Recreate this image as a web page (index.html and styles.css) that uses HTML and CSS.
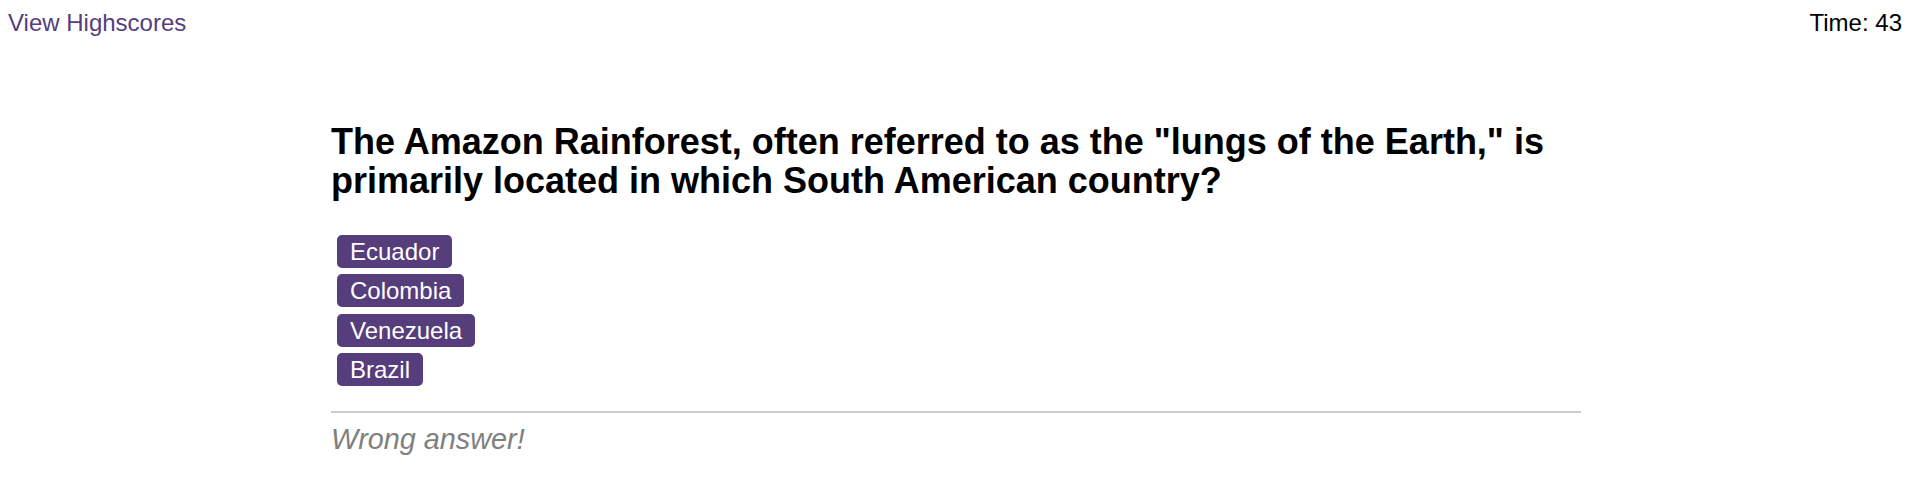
FILE: index.html
```html
<!DOCTYPE html>
<html>
<head>
<meta charset="utf-8">
<link rel="stylesheet" href="styles.css">
</head>
<body>
<header class="topbar">
  <a class="highscores" href="#">View Highscores</a>
  <div class="timer">Time: 43</div>
</header>
<main class="quiz">
  <h1 class="question">The Amazon Rainforest, often referred to as the "lungs of the Earth," is primarily located in which South American country?</h1>
  <div class="choices">
    <button class="choice">Ecuador</button>
    <button class="choice">Colombia</button>
    <button class="choice">Venezuela</button>
    <button class="choice">Brazil</button>
  </div>
  <div class="feedback">Wrong answer!</div>
</main>
</body>
</html>
```
FILE: styles.css
```css
body {
  margin: 8px;
  font-family: "Liberation Sans", Arial, sans-serif;
  color: #000;
  background: #fff;
}
.topbar {
  display: flex;
  justify-content: space-between;
  font-size: 24px;
  line-height: 30px;
  padding-right: 6px;
}
.highscores {
  color: #563d7c;
  text-decoration: none;
}
.quiz {
  width: 1250px;
  margin: 84px 0 0 calc(50% - 627px);
}
.question {
  font-size: 36px;
  line-height: 39px;
  font-weight: bold;
  margin: 0 0 35px;
}
.choices {
  display: flex;
  flex-direction: column;
  align-items: flex-start;
  gap: 6.3px;
  padding-left: 6px;
}
.choice {
  font-family: "Liberation Sans", Arial, sans-serif;
  font-size: 24px;
  line-height: 27px;
  color: #fff;
  background: #563d7c;
  border: none;
  border-radius: 5px;
  padding: 3px 13px;
}
.feedback {
  margin-top: 25px;
  border-top: 2px solid #ccc;
  padding-top: 10px;
  font-size: 28.8px;
  font-style: italic;
  color: #808080;
}
```
